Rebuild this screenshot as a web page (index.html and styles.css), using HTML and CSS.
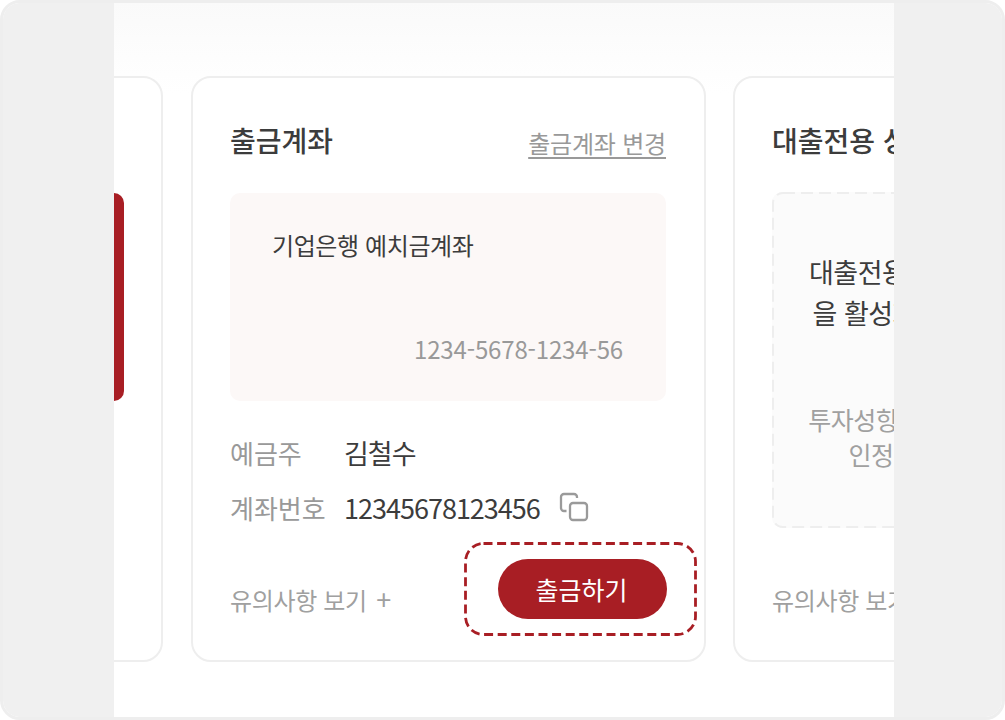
FILE: index.html
```html
<!DOCTYPE html>
<html lang="ko">
<head>
  <meta charset="UTF-8" />
  <title>출금계좌</title>
  <link rel="stylesheet" href="styles.css">
</head>
<body>
  <div class="frame">
    <div class="side side-left"></div>

    <main class="stage">
      <div class="cards">
        <section class="card card-prev">
          <div class="prev-box"></div>
        </section>

        <section class="card">
          <div class="card-head">
            <h3>출금계좌</h3>
            <a class="change-link" href="#">출금계좌 변경</a>
          </div>
          <div class="account-box">
            <p class="bank-name">기업은행 예치금계좌</p>
            <p class="bank-number">1234-5678-1234-56</p>
          </div>
          <dl class="info-list">
            <div class="info-row">
              <dt>예금주</dt>
              <dd>김철수</dd>
            </div>
            <div class="info-row">
              <dt>계좌번호</dt>
              <dd>12345678123456</dd>
              <svg class="copy-icon" width="30" height="30" viewBox="0 0 30 30" fill="none" stroke="#9a9a9a" stroke-width="2.3">
                <path d="M18 6V5a3 3 0 0 0-3-3H5a3 3 0 0 0-3 3v11a3 3 0 0 0 3 3h2.5"/>
                <rect x="11" y="11" width="17" height="17" rx="3"/>
              </svg>
            </div>
          </dl>
          <div class="card-foot">
            <a class="notice-link" href="#">유의사항 보기 <span class="plus">+</span></a>
            <div class="focus-ring">
              <svg class="ring-line" width="233" height="94" fill="none" stroke="#a81e24" stroke-width="2.8" stroke-dasharray="9 4.6">
                <rect x="1.5" y="1.5" width="230" height="91" rx="18"/>
              </svg>
              <button type="button" class="withdraw-btn">출금하기</button>
            </div>
          </div>
        </section>

        <section class="card card-next">
          <div class="card-head">
            <h3>대출전용 상품</h3>
          </div>
          <div class="empty-box">
            <svg class="empty-line" width="436" height="336" fill="none" stroke="#eeeeee" stroke-width="2" stroke-dasharray="12 6">
              <rect x="1" y="1" width="434" height="334" rx="10"/>
            </svg>
            <p class="empty-title">대출전용 상품을 이용하려면 계좌<br>을 활성화하시면 이용가능합니다</p>
            <p class="empty-desc">투자성향 진단 결과에 따라 투자자로<br>인정된 고객님만 가능합니다</p>
          </div>
          <div class="card-foot">
            <a class="notice-link" href="#">유의사항 보기 <span class="plus">+</span></a>
          </div>
        </section>
      </div>
    </main>

    <div class="side side-right"></div>
  </div>
</body>
</html>
```

FILE: styles.css
```css
* {
  box-sizing: border-box;
}
html, body {
  margin: 0;
  height: 100%;
  background-color: #fff;
}
body {
  font-family: "Noto Sans CJK KR", "Noto Sans", sans-serif;
  color: #3c3c3c;
}
.frame {
  display: flex;
  width: 1005px;
  height: 720px;
  overflow: hidden;
  border: 3px solid #eeeeee;
  border-radius: 20px;
  background-color: #fff;
}
.side {
  flex: none;
  background-color: #f0f0f0;
}
.side-left {
  width: 111px;
}
.side-right {
  width: 108px;
}
.stage {
  flex: 1;
  min-width: 0;
  overflow: hidden;
  padding-top: 73px;
  background: linear-gradient(#fafafa, #fff 90px);
}
.cards {
  display: flex;
  gap: 28px;
  margin-left: -466px;
}
.card {
  flex: none;
  width: 515px;
  height: 586px;
  padding: 40px 38px 0 37px;
  background-color: #fff;
  border: 2px solid #eeeeee;
  border-radius: 20px;
}
.card-prev {
  padding: 115px 0 0;
}
.prev-box {
  width: 474px;
  height: 208px;
  background-color: #a81e24;
  border-radius: 0 10px 10px 0;
}
.card-next {
  margin-left: -1px;
}
.card-head {
  display: flex;
  justify-content: space-between;
  align-items: center;
  height: 48px;
}
h3 {
  margin: 0 0 4px;
  font-size: 28px;
  font-weight: 500;
  white-space: nowrap;
}
.change-link {
  font-size: 24px;
  font-weight: 400;
  letter-spacing: -0.2px;
  color: #999;
  text-decoration: underline;
  text-underline-offset: 4px;
}
.account-box {
  display: flex;
  flex-direction: column;
  justify-content: space-between;
  height: 208px;
  margin-top: 27px;
  padding: 34px 43px 35px 42px;
  background-color: #fcf8f7;
  border-radius: 10px;
}
.bank-name, .bank-number {
  margin: 0;
  font-size: 24px;
  font-weight: 400;
  letter-spacing: -0.4px;
}
.bank-number {
  text-align: right;
  letter-spacing: -0.15px;
  color: #999;
}
.info-list {
  display: flex;
  flex-direction: column;
  gap: 19px;
  margin: 33px 0 17px;
}
.info-row {
  display: flex;
  align-items: center;
  height: 36px;
}
.info-row dt {
  width: 114px;
  font-size: 26px;
  font-weight: 400;
  color: #999;
}
.info-row dd {
  margin: 0;
  font-size: 27px;
  font-weight: 400;
  letter-spacing: -1px;
}
.copy-icon {
  margin-left: 19px;
}
.card-foot {
  display: flex;
  justify-content: space-between;
  align-items: center;
  height: 94px;
}
.notice-link {
  margin-top: 20px;
  font-size: 24px;
  font-weight: 400;
  letter-spacing: -0.35px;
  color: #a0a0a0;
  text-decoration: none;
  white-space: nowrap;
}
.plus {
  margin-left: 3px;
  font-size: 27px;
  line-height: 1;
}
.focus-ring {
  position: relative;
  margin-right: -31px;
  padding: 17px 30px 17px 34px;
}
.ring-line, .empty-line {
  position: absolute;
  top: 0;
  left: 0;
}
.withdraw-btn {
  display: block;
  width: 169px;
  height: 60px;
  padding: 0 2px 0 0;
  border: none;
  border-radius: 30px;
  background-color: #a81e24;
  color: #fff;
  font-family: inherit;
  font-size: 25px;
  font-weight: 400;
}
.empty-box {
  position: relative;
  height: 336px;
  margin: 26px 0 14px;
  padding-top: 59px;
  background-color: #fbfbfb;
  border-radius: 10px;
  text-align: center;
  white-space: nowrap;
}
.empty-title {
  margin: 0 0 69px;
  font-size: 27px;
  line-height: 41px;
  font-weight: 400;
  letter-spacing: -0.5px;
}
.empty-desc {
  margin: 0;
  font-size: 25px;
  line-height: 35px;
  font-weight: 400;
  letter-spacing: -0.5px;
  color: #a0a0a0;
}
```
